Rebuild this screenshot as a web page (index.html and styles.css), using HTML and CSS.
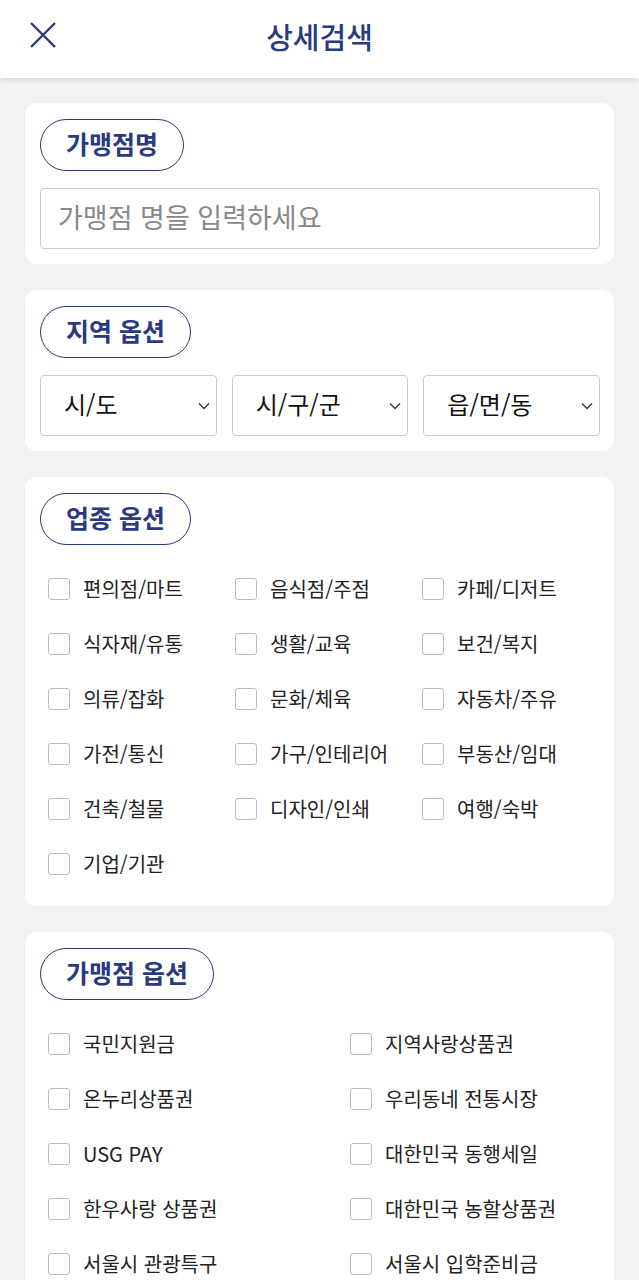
FILE: index.html
```html
<!DOCTYPE html>
<html lang="ko">
<head>
    <meta charset="UTF-8">
    <meta name="viewport" content="width=device-width, initial-scale=1.0">
    <title>상세검색</title>
    <link rel="stylesheet" href="styles.css">
</head>
<body>
    <header class="topbar">
        <button class="close-btn" aria-label="닫기">
            <svg width="30" height="30" viewBox="0 0 30 30">
                <path d="M3 3 L27 27 M27 3 L3 27" stroke="#2b3a7e" stroke-width="2.4" fill="none"/>
            </svg>
        </button>
        <h1 class="title">상세검색</h1>
    </header>

    <main class="content">
        <section class="card">
            <div class="pill">가맹점명</div>
            <input class="text-input" type="text" placeholder="가맹점 명을 입력하세요">
        </section>

        <section class="card">
            <div class="pill">지역 옵션</div>
            <div class="selects">
                <div class="select"><span>시/도</span><svg class="chev" width="12" height="8" viewBox="0 0 12 8"><path d="M1 1.5 L6 6.5 L11 1.5" stroke="#333" stroke-width="1.3" fill="none"/></svg></div>
                <div class="select"><span>시/구/군</span><svg class="chev" width="12" height="8" viewBox="0 0 12 8"><path d="M1 1.5 L6 6.5 L11 1.5" stroke="#333" stroke-width="1.3" fill="none"/></svg></div>
                <div class="select"><span>읍/면/동</span><svg class="chev" width="12" height="8" viewBox="0 0 12 8"><path d="M1 1.5 L6 6.5 L11 1.5" stroke="#333" stroke-width="1.3" fill="none"/></svg></div>
            </div>
        </section>

        <section class="card">
            <div class="pill">업종 옵션</div>
            <div class="checks three">
                <label class="check"><span class="box"></span>편의점/마트</label>
                <label class="check"><span class="box"></span>음식점/주점</label>
                <label class="check"><span class="box"></span>카페/디저트</label>
                <label class="check"><span class="box"></span>식자재/유통</label>
                <label class="check"><span class="box"></span>생활/교육</label>
                <label class="check"><span class="box"></span>보건/복지</label>
                <label class="check"><span class="box"></span>의류/잡화</label>
                <label class="check"><span class="box"></span>문화/체육</label>
                <label class="check"><span class="box"></span>자동차/주유</label>
                <label class="check"><span class="box"></span>가전/통신</label>
                <label class="check"><span class="box"></span>가구/인테리어</label>
                <label class="check"><span class="box"></span>부동산/임대</label>
                <label class="check"><span class="box"></span>건축/철물</label>
                <label class="check"><span class="box"></span>디자인/인쇄</label>
                <label class="check"><span class="box"></span>여행/숙박</label>
                <label class="check"><span class="box"></span>기업/기관</label>
            </div>
        </section>

        <section class="card">
            <div class="pill">가맹점 옵션</div>
            <div class="checks two">
                <label class="check"><span class="box"></span>국민지원금</label>
                <label class="check"><span class="box"></span>지역사랑상품권</label>
                <label class="check"><span class="box"></span>온누리상품권</label>
                <label class="check"><span class="box"></span>우리동네 전통시장</label>
                <label class="check"><span class="box"></span>USG PAY</label>
                <label class="check"><span class="box"></span>대한민국 동행세일</label>
                <label class="check"><span class="box"></span>한우사랑 상품권</label>
                <label class="check"><span class="box"></span>대한민국 농할상품권</label>
                <label class="check"><span class="box"></span>서울시 관광특구</label>
                <label class="check"><span class="box"></span>서울시 입학준비금</label>
            </div>
        </section>
    </main>
</body>
</html>
```

FILE: styles.css
```css
body {
    margin: 0;
    background-color: #f2f2f2;
    font-family: "Noto Sans CJK KR", "Noto Sans", sans-serif;
    color: #222;
}
.topbar {
    position: relative;
    height: 78px;
    background-color: #fff;
    box-shadow: 0 2px 6px rgba(0,0,0,0.12);
    display: flex;
    align-items: center;
    justify-content: center;
}
.close-btn {
    position: absolute;
    left: 28px;
    top: 20px;
    padding: 0;
    border: none;
    background: none;
    width: 30px;
    height: 30px;
}
.title {
    margin: 0;
    margin-top: -6px;
    font-size: 29px;
    font-weight: 500;
    color: #2b3a7e;
    line-height: 1;
}
.content {
    padding: 25px 25px 0;
    display: flex;
    flex-direction: column;
    gap: 26px;
}
.card {
    background-color: #fff;
    border-radius: 12px;
    padding: 16px 14px 15px 15px;
}
.pill {
    display: inline-flex;
    align-items: center;
    height: 52px;
    box-sizing: border-box;
    padding: 0 25px 3px;
    border: 1.5px solid #2b3a7e;
    border-radius: 26px;
    color: #2b3a7e;
    font-size: 25px;
    font-weight: 700;
    line-height: 1;
}
.text-input {
    display: block;
    width: 100%;
    box-sizing: border-box;
    height: 61px;
    margin-top: 17px;
    border: 1.5px solid #ccc;
    border-radius: 4px;
    padding: 0 17px 4px;
    font-family: inherit;
    font-size: 27px;
    color: #222;
}
.text-input::placeholder {
    color: #888;
}
.selects {
    margin-top: 17px;
    display: grid;
    grid-template-columns: repeat(3, 1fr);
    gap: 15px;
}
.select {
    height: 61px;
    box-sizing: border-box;
    border: 1.5px solid #ccc;
    border-radius: 4px;
    display: flex;
    align-items: center;
    justify-content: space-between;
    padding: 0 6px 4px 23px;
    font-size: 24px;
    color: #111;
}
.chev {
    margin-top: 4px;
}
.checks {
    margin-top: 16px;
    display: grid;
}
.checks.three {
    grid-template-columns: repeat(3, 187px);
}
.checks.two {
    grid-template-columns: 302px 1fr;
}
.check {
    height: 55px;
    display: flex;
    align-items: center;
    padding-left: 8px;
    font-size: 20px;
    color: #222;
    white-space: nowrap;
}
.box {
    width: 20px;
    height: 20px;
    border: 1.5px solid #bbb;
    border-radius: 3px;
    margin-right: 13px;
    flex-shrink: 0;
}
```
